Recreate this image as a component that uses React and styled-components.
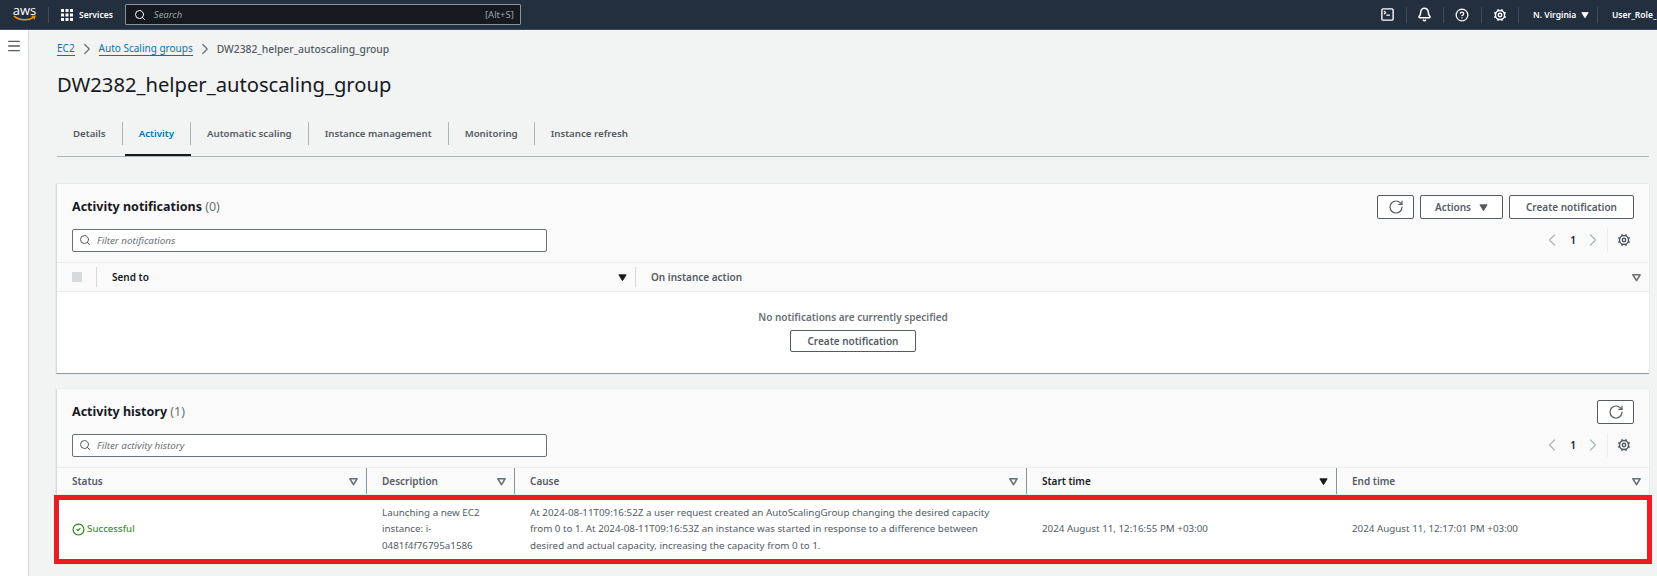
import React from 'react'
import styled, {createGlobalStyle} from 'styled-components'
import {
  Bell,
  ChevronLeft,
  ChevronRight,
  CircleCheck,
  CircleHelp,
  Menu,
  RotateCw,
  Search,
  SquareTerminal,
} from 'lucide-react'

const GlobalStyle = createGlobalStyle`
  html, body {
    margin: 0;
    height: 576px;
    overflow: hidden;
    background: #f2f3f3;
    font-family: "Noto Sans", "Open Sans", sans-serif;
  }
  * {
    box-sizing: border-box;
  }
`

const Caret = ({size = 9, outline, color = '#16191f'}) => (
  <svg width={size} height={size} viewBox="0 0 10 10">
    <path
      d="M1 2 H9 L5 8.5 Z"
      fill={outline ? 'none' : color}
      stroke={color}
      strokeWidth={outline ? 1.8 : 1}
      strokeLinejoin="round"
    />
  </svg>
)

const TEETH = [0, 45, 90, 135, 180, 225, 270, 315]

const Gear = ({size = 14, color = '#545b64'}) => (
  <svg width={size} height={size} viewBox="0 0 16 16" fill="none" stroke={color}>
    <circle cx="8" cy="8" r="5.2" strokeWidth="1.6" />
    <circle cx="8" cy="8" r="2" strokeWidth="1.6" />
    {TEETH.map((deg) => (
      <path
        key={deg}
        d="M8 1 V3"
        strokeWidth="2"
        transform={`rotate(${deg + 22.5} 8 8)`}
      />
    ))}
  </svg>
)

const TopBar = styled.header`
  height: 30px;
  display: flex;
  align-items: center;
  background: #232f3e;
  border-bottom: 1px solid #414d5c;
  color: #fff;
  font-size: 8.5px;
  white-space: nowrap;
  overflow: hidden;
`
const Logo = styled.div`
  width: 23px;
  height: 20px;
  margin: 0 12px 0 13px;
  display: flex;
  flex-direction: column;
  align-items: center;
  font-family: "Open Sans", sans-serif;
  font-size: 13px;
  line-height: 11px;
  svg {
    margin-top: -1px;
    flex: none;
  }
`
const BarDivider = styled.span`
  width: 1px;
  height: 16px;
  background: #414d5c;
`
const Services = styled.div`
  display: flex;
  align-items: center;
  gap: 6px;
  margin: 0 12px;
  font-weight: 600;
`
const SearchBox = styled.div`
  width: 396px;
  height: 21px;
  display: flex;
  align-items: center;
  padding: 0 6px 0 8px;
  gap: 8px;
  background: #16191f;
  border: 1px solid #879596;
  border-radius: 1px;
  color: #95a5a6;
  font-size: 9.5px;
  em {
    flex: 1;
  }
`
const BarRight = styled.div`
  margin-left: auto;
  display: flex;
  align-items: center;
`
const BarIcon = styled.div`
  width: 37.5px;
  height: 16px;
  display: flex;
  align-items: center;
  justify-content: center;
  border-right: 1px solid #414d5c;
`
const Region = styled.div`
  width: 79px;
  height: 16px;
  display: flex;
  align-items: center;
  gap: 5px;
  padding-left: 14px;
  border-right: 1px solid #414d5c;
  font-weight: 600;
`
const UserName = styled.div`
  width: 59px;
  padding-left: 14px;
  overflow: hidden;
  font-weight: 600;
`

const Body = styled.div`
  display: flex;
  height: 546px;
`
const SideRail = styled.aside`
  width: 29px;
  background: #fff;
  border-right: 1px solid #d5dbdb;
  padding: 7px 0 0 6px;
  color: #545b64;
`
const Main = styled.main`
  flex: 1;
  padding: 12px 8px 0 27px;
  min-width: 0;
`
const Crumbs = styled.nav`
  display: flex;
  align-items: center;
  height: 14px;
  margin-left: 1px;
  gap: 3px;
  font-size: 10.3px;
  color: #545b64;
  font-weight: 500;
  a {
    color: #0073bb;
    border-bottom: 1px solid #0073bb;
    font-size: 10px;
    line-height: 13px;
    font-weight: 400;
  }
`
const Title = styled.h1`
  margin: 12px 0 0 1px;
  height: 32px;
  font-size: 20.2px;
  line-height: 32px;
  font-weight: 400;
  color: #16191f;
`
const TabRow = styled.div`
  margin: 22px 0 0 1px;
  height: 35px;
  display: flex;
  align-items: flex-start;
  border-bottom: 1px solid #aab7b8;
`
const Tab = styled.div`
  height: 23px;
  padding: 0 16px;
  display: flex;
  align-items: center;
  position: relative;
  font-size: 9.7px;
  font-weight: 600;
  color: ${(p) => (p.$active ? '#0073bb' : '#545b64')};
  border-right: ${(p) => (p.$last ? 'none' : '1px solid #aab7b8')};
  ${(p) =>
    p.$active &&
    `&::after {
      content: '';
      position: absolute;
      left: 2px;
      right: -1px;
      top: 32px;
      height: 2px;
      background: #16191f;
    }`}
`
const Panel = styled.section`
  margin-top: ${(p) => p.$top}px;
  background: #fff;
  border-left: 1px solid #d5dbdb;
  border-bottom: ${(p) => (p.$flat ? 'none' : '1px solid #8d99a8')};
  box-shadow: 0 0 1px rgba(0, 28, 36, 0.2);
`
const PanelHead = styled.div`
  height: 79px;
  padding: 11px 15px 0 15px;
  background: #fafafa;
  border-bottom: 1px solid #eaeded;
`
const PanelTop = styled.div`
  height: 24px;
  display: flex;
  align-items: center;
  justify-content: space-between;
`
const PanelTitle = styled.h2`
  margin: 0 0 2px;
  font-size: 12.5px;
  font-weight: 700;
  color: #16191f;
  span {
    font-weight: 400;
    color: #687078;
  }
`
const Actions = styled.div`
  display: flex;
  gap: 6px;
`
const Button = styled.button`
  height: ${(p) => p.$height || 24}px;
  width: ${(p) => p.$width}px;
  display: flex;
  align-items: center;
  justify-content: center;
  gap: 8px;
  padding: 0;
  background: #fff;
  border: 1px solid #545b64;
  border-radius: 2px;
  color: #545b64;
  font-family: inherit;
  font-size: 10px;
  font-weight: 600;
`
const FilterRow = styled.div`
  margin-top: 9px;
  display: flex;
  align-items: center;
  justify-content: space-between;
`
const Filter = styled.div`
  width: 475px;
  height: 23px;
  display: flex;
  align-items: center;
  gap: 6px;
  padding: 0 6px;
  background: #fff;
  border: 1px solid #687078;
  border-radius: 2px;
  color: #545b64;
  em {
    color: #687078;
    font-size: 9.8px;
  }
`
const Pager = styled.div`
  display: flex;
  align-items: center;
  margin-right: 3px;
  font-size: 10px;
  font-weight: 600;
  color: #16191f;
`
const PageNumber = styled.span`
  padding: 0 7px 0 8px;
`
const PagerDivider = styled.span`
  width: 1px;
  height: 24px;
  margin: 0 9px 0 4px;
  background: #eaeded;
`
const TableGrid = styled.div`
  display: grid;
  grid-template-columns: ${(p) => p.$cols};
  min-height: ${(p) => p.$minHeight || 0}px;
  background: ${(p) => (p.$head ? '#fafafa' : '#fff')};
  border-bottom: ${(p) => (p.$head ? '1px solid #eaeded' : 'none')};
`
const HeadCell = styled.div`
  height: ${(p) => p.$h || 26}px;
  margin: auto 0;
  display: flex;
  align-items: center;
  justify-content: space-between;
  padding: 0 8px 0 ${(p) => p.$pad || 15}px;
  font-size: 10px;
  font-weight: 600;
  color: ${(p) => (p.$sorted ? '#16191f' : '#545b64')};
  border-right: ${(p) => (p.$last ? 'none' : `1px solid ${p.$line || '#879596'}`)};
`
const Checkbox = styled.span`
  width: 10px;
  height: 10px;
  background: #d5dbdb;
  display: block;
`
const BodyCell = styled.div`
  padding: 0 20px 0 15px;
  display: flex;
  align-items: center;
  font-size: 9.8px;
  line-height: 16.5px;
  color: #545b64;
`
const Status = styled.div`
  display: flex;
  align-items: center;
  gap: 2px;
  color: #1d8102;
`
const HighlightRow = styled.div`
  position: relative;
  &::after {
    content: '';
    position: absolute;
    inset: 0 -3px 0 -3px;
    border: 5px solid #ed1c24;
    pointer-events: none;
  }
`
const Empty = styled.div`
  height: 81px;
  padding-top: 18px;
  display: flex;
  flex-direction: column;
  align-items: center;
  gap: 6px;
  font-size: 10px;
  font-weight: 600;
  line-height: 14px;
  color: #687078;
`

const ServicesIcon = () => (
  <svg width="12" height="12" viewBox="0 0 12 12" fill="#fff">
    {[0, 4.5, 9].flatMap((x) =>
      [0, 4.5, 9].map((y) => <rect key={`${x}_${y}`} x={x} y={y} width="3" height="3" />)
    )}
  </svg>
)

const Smile = () => (
  <svg width="23" height="7" viewBox="0 0 24 7" fill="none">
    <path d="M1 1 C7 6 16 6 22 2" stroke="#ff9900" strokeWidth="1.5" />
    <path d="M19.5 1 L23 1.2 L22 4.5" stroke="#ff9900" strokeWidth="1.1" />
  </svg>
)

const PanelPager = () => (
  <Pager>
    <ChevronLeft size={20} strokeWidth={1.5} color="#aab7b8" />
    <PageNumber>1</PageNumber>
    <ChevronRight size={20} strokeWidth={1.5} color="#aab7b8" />
    <PagerDivider />
    <Gear />
  </Pager>
)

const HISTORY_COLS = '310px 148px 512px 310px 1fr'
const NOTIFY_COLS = '40px 539px 1fr'

export default function App() {
  return (
    <>
      <GlobalStyle />
      <TopBar>
        <Logo>
          aws
          <Smile />
        </Logo>
        <BarDivider />
        <Services>
          <ServicesIcon />
          Services
        </Services>
        <SearchBox>
          <Search size={12} color="#fff" />
          <em>Search</em>
          <span>[Alt+S]</span>
        </SearchBox>
        <BarRight>
          <BarIcon>
            <SquareTerminal size={15} color="#fff" strokeWidth={2.2} />
          </BarIcon>
          <BarIcon>
            <Bell size={15} color="#fff" strokeWidth={2.4} />
          </BarIcon>
          <BarIcon>
            <CircleHelp size={14} color="#fff" strokeWidth={2.2} />
          </BarIcon>
          <BarIcon>
            <Gear color="#fff" />
          </BarIcon>
          <Region>
            N. Virginia
            <Caret size={8} color="#fff" />
          </Region>
          <UserName>User_Role_Dev</UserName>
        </BarRight>
      </TopBar>
      <Body>
        <SideRail>
          <Menu size={16} />
        </SideRail>
        <Main>
          <Crumbs>
            <a>EC2</a>
            <ChevronRight size={18} strokeWidth={1.6} color="#687078" />
            <a>Auto Scaling groups</a>
            <ChevronRight size={18} strokeWidth={1.6} color="#687078" />
            <span>DW2382_helper_autoscaling_group</span>
          </Crumbs>
          <Title>DW2382_helper_autoscaling_group</Title>
          <TabRow>
            <Tab>Details</Tab>
            <Tab $active>Activity</Tab>
            <Tab>Automatic scaling</Tab>
            <Tab>Instance management</Tab>
            <Tab>Monitoring</Tab>
            <Tab $last>Instance refresh</Tab>
          </TabRow>

          <Panel $top={27}>
            <PanelHead>
              <PanelTop>
                <PanelTitle>
                  Activity notifications <span>(0)</span>
                </PanelTitle>
                <Actions>
                  <Button $width={37}>
                    <RotateCw size={16} strokeWidth={1.8} />
                  </Button>
                  <Button $width={83}>
                    Actions
                    <Caret color="#545b64" />
                  </Button>
                  <Button $width={125}>Create notification</Button>
                </Actions>
              </PanelTop>
              <FilterRow>
                <Filter>
                  <Search size={12} />
                  <em>Filter notifications</em>
                </Filter>
                <PanelPager />
              </FilterRow>
            </PanelHead>
            <TableGrid $head $cols={NOTIFY_COLS}>
              <HeadCell $h={20} $line="#d5dbdb">
                <Checkbox />
              </HeadCell>
              <HeadCell $h={20} $sorted $line="#d5dbdb">
                Send to
                <Caret />
              </HeadCell>
              <HeadCell $h={28} $last>
                On instance action
                <Caret outline color="#687078" />
              </HeadCell>
            </TableGrid>
            <Empty>
              No notifications are currently specified
              <Button $width={126} $height={22}>Create notification</Button>
            </Empty>
          </Panel>

          <Panel $top={15} $flat>
            <PanelHead>
              <PanelTop>
                <PanelTitle>
                  Activity history <span>(1)</span>
                </PanelTitle>
                <Actions>
                  <Button $width={37}>
                    <RotateCw size={16} strokeWidth={1.8} />
                  </Button>
                </Actions>
              </PanelTop>
              <FilterRow>
                <Filter>
                  <Search size={12} />
                  <em>Filter activity history</em>
                </Filter>
                <PanelPager />
              </FilterRow>
            </PanelHead>
            <TableGrid $cols={HISTORY_COLS} $head>
              <HeadCell>
                Status
                <Caret outline color="#687078" />
              </HeadCell>
              <HeadCell>
                Description
                <Caret outline color="#687078" />
              </HeadCell>
              <HeadCell>
                Cause
                <Caret outline color="#687078" />
              </HeadCell>
              <HeadCell $sorted>
                Start time
                <Caret />
              </HeadCell>
              <HeadCell $last>
                End time
                <Caret outline color="#687078" />
              </HeadCell>
            </TableGrid>
            <HighlightRow>
              <TableGrid $cols={HISTORY_COLS} $minHeight={69}>
                <BodyCell>
                  <Status>
                    <CircleCheck size={13} />
                    Successful
                  </Status>
                </BodyCell>
                <BodyCell>
                  Launching a new EC2 instance: i-0481f4f76795a1586
                </BodyCell>
                <BodyCell>
                  At 2024-08-11T09:16:52Z a user request created an AutoScalingGroup changing the desired capacity from 0 to 1. At 2024-08-11T09:16:53Z an instance was started in response to a difference between desired and actual capacity, increasing the capacity from 0 to 1.
                </BodyCell>
                <BodyCell>2024 August 11, 12:16:55 PM +03:00</BodyCell>
                <BodyCell>2024 August 11, 12:17:01 PM +03:00</BodyCell>
              </TableGrid>
            </HighlightRow>
          </Panel>
        </Main>
      </Body>
    </>
  )
}
